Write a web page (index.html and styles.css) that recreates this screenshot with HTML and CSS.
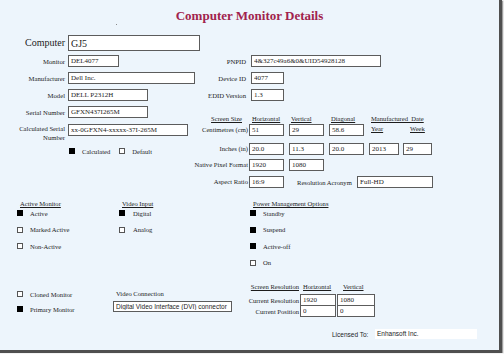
FILE: index.html
```html
<!DOCTYPE html>
<html lang="en">
<head>
    <meta charset="UTF-8">
    <meta name="viewport" content="width=device-width, initial-scale=1.0">
    <title>Computer Monitor Details</title>
    <link rel="stylesheet" href="styles.css">
</head>
<body>
    <div class="window">
        <h1 class="title">Computer Monitor Details</h1>
        <div class="dot"></div>

        <div class="top">
            <div class="col-left">
                <div class="field-row big">
                    <label class="lbl">Computer</label>
                    <input class="field w137" type="text" value="GJ5" readonly>
                </div>
                <div class="field-row first">
                    <label class="lbl">Monitor</label>
                    <input class="field w51" type="text" value="DEL4077" readonly>
                </div>
                <div class="field-row">
                    <label class="lbl">Manufacturer</label>
                    <input class="field w127" type="text" value="Dell Inc." readonly>
                </div>
                <div class="field-row">
                    <label class="lbl">Model</label>
                    <input class="field w80" type="text" value="DELL P2312H" readonly>
                </div>
                <div class="field-row">
                    <label class="lbl">Serial Number</label>
                    <input class="field w80" type="text" value="GFXN437I265M" readonly>
                </div>
                <div class="field-row tall">
                    <label class="lbl">Calculated Serial<br>Number</label>
                    <input class="field w120" type="text" value="xx-0GFXN4-xxxxx-37I-265M" readonly>
                </div>
                <div class="checks">
                    <span class="check"><span class="box on"></span>Calculated</span>
                    <span class="check"><span class="box"></span>Default</span>
                </div>
            </div>

            <div class="col-right">
                <div class="field-row first">
                    <label class="lbl">PNPID</label>
                    <input class="field w130" type="text" value="4&amp;327c49a6&amp;0&amp;UID54928128" readonly>
                </div>
                <div class="field-row">
                    <label class="lbl">Device ID</label>
                    <input class="field w33" type="text" value="4077" readonly>
                </div>
                <div class="field-row">
                    <label class="lbl">EDID Version</label>
                    <input class="field w33" type="text" value="1.3" readonly>
                </div>

                <div class="size-grid">
                    <span class="head lbl-cell"><span>Screen Size</span></span>
                    <span class="head">Horizontal</span>
                    <span class="head">Vertical</span>
                    <span class="head">Diagonal</span>
                    <span class="head span2">Manufactured&nbsp; Date</span>

                    <span class="lbl-cell">Centimetres (cm)</span>
                    <input class="field w35" type="text" value="51" readonly>
                    <input class="field w35" type="text" value="29" readonly>
                    <input class="field w35" type="text" value="58.6" readonly>
                    <span class="head">Year</span>
                    <span class="head week">Week</span>

                    <span class="lbl-cell">Inches (in)</span>
                    <input class="field w35" type="text" value="20.0" readonly>
                    <input class="field w35" type="text" value="11.3" readonly>
                    <input class="field w35" type="text" value="20.0" readonly>
                    <input class="field w30" type="text" value="2013" readonly>
                    <input class="field w29" type="text" value="29" readonly>

                    <span class="lbl-cell">Native Pixel Format</span>
                    <input class="field w35" type="text" value="1920" readonly>
                    <input class="field w35 span4" type="text" value="1080" readonly>

                    <span class="lbl-cell">Aspect Ratio</span>
                    <input class="field w35" type="text" value="16:9" readonly>
                    <div class="acronym">
                        <span>Resolution Acronym</span>
                        <input class="field w76" type="text" value="Full-HD" readonly>
                    </div>
                </div>
            </div>
        </div>

        <div class="options">
            <div class="group g1">
                <div class="head">Active Monitor</div>
                <div class="items">
                    <span class="check"><span class="box on"></span>Active</span>
                    <span class="check"><span class="box"></span>Marked Active</span>
                    <span class="check"><span class="box"></span>Non-Active</span>
                </div>
            </div>
            <div class="group g2">
                <div class="head">Video Input</div>
                <div class="items">
                    <span class="check wide"><span class="box on"></span>Digital</span>
                    <span class="check wide"><span class="box"></span>Analog</span>
                </div>
            </div>
            <div class="group">
                <div class="head head-power">Power Management Options</div>
                <div class="items">
                    <span class="check"><span class="box on"></span>Standby</span>
                    <span class="check"><span class="box on"></span>Suspend</span>
                    <span class="check"><span class="box on"></span>Active-off</span>
                    <span class="check"><span class="box"></span>On</span>
                </div>
            </div>
        </div>

        <div class="bottom">
            <div class="group b1">
                <span class="check"><span class="box"></span>Cloned Monitor</span>
                <span class="check"><span class="box on"></span>Primary Monitor</span>
            </div>
            <div class="group b2">
                <span class="conn-label">Video Connection</span>
                <input class="field sans w119" type="text" value="Digital Video Interface (DVI) connector" readonly>
            </div>
            <div class="res-table">
                <div class="res-row">
                    <span class="res-lbl"><span class="head">Screen Resolution</span></span>
                    <span class="head res-h">Horizontal</span>
                    <span class="head res-v">Vertical</span>
                </div>
                <div class="res-row vals">
                    <span class="res-lbl">Current Resolution</span>
                    <input class="field w36" type="text" value="1920" readonly>
                    <input class="field w38" type="text" value="1080" readonly>
                </div>
                <div class="res-row vals next">
                    <span class="res-lbl">Current Position</span>
                    <input class="field w36" type="text" value="0" readonly>
                    <input class="field w38" type="text" value="0" readonly>
                </div>
            </div>
        </div>

        <div class="license">
            <span class="license-label">Licensed To:</span>
            <span class="license-value">Enhansoft Inc.</span>
        </div>
    </div>
</body>
</html>
```

FILE: styles.css
```css
body {
    margin: 0;
    background: #f3f3f3;
    font-family: "Liberation Serif", "Times New Roman", serif;
    color: #1c1c1c;
}

.window {
    width: 502px;
    height: 353px;
    box-sizing: border-box;
    background: #edf5fc;
    border-right: 3px solid #4f4f4f;
    border-bottom: 3px solid #4f4f4f;
    box-shadow: 1px 1px 1px rgba(0, 0, 0, 0.35);
    overflow: hidden;
    white-space: nowrap;
}

.title {
    margin: 0;
    padding-top: 8px;
    font-size: 13px;
    line-height: 15px;
    font-weight: bold;
    text-align: center;
    color: #a1234d;
}

.dot {
    width: 1px;
    height: 1px;
    margin: 1px 0 0 116px;
    background: #8a8a8a;
}

/* inputs */
.field {
    display: block;
    box-sizing: border-box;
    height: 12px;
    margin: 0;
    padding: 0 2px;
    border: 1px solid #5c5c5c;
    background: #fff;
    font-family: "Liberation Serif", "Times New Roman", serif;
    font-size: 7px;
    color: #1c1c1c;
    outline: none;
}

.field.sans {
    font-family: "Liberation Sans", Arial, sans-serif;
    font-size: 6.5px;
}

.w29 { width: 29px; }
.w30 { width: 30px; }
.w33 { width: 33px; }
.w35 { width: 35px; }
.w36 { width: 36px; }
.w38 { width: 38px; }
.w51 { width: 51px; }
.w76 { width: 76px; }
.w80 { width: 80px; }
.w119 { width: 119px; }
.w120 { width: 120px; }
.w127 { width: 127px; }
.w130 { width: 130px; }
.w137 { width: 137px; }

/* top area */
.top {
    display: flex;
    margin-top: 10px;
}

.col-left {
    flex: none;
    width: 200px;
    min-width: 0;
}

.col-right {
    padding-top: 20px;
}

.field-row {
    display: flex;
    align-items: center;
    gap: 3px;
    margin-top: 5px;
}

.field-row.big,
.field-row.first {
    margin-top: 0;
}

.col-left .field-row.first {
    margin-top: 4px;
}

.field-row.tall {
    align-items: flex-start;
    margin-top: 6px;
}

.lbl {
    flex: none;
    width: 65px;
    text-align: right;
    font-size: 6.7px;
    line-height: 9px;
}

.col-right .field-row {
    gap: 5px;
}

.col-right .lbl {
    width: 46px;
}

.big .lbl {
    font-size: 10px;
    line-height: 12px;
}

.big .field {
    height: 16px;
    font-size: 10px;
}

.checks {
    display: flex;
    align-items: center;
    margin-top: 4px;
    padding-left: 69px;
}

.checks .check {
    margin-right: 9px;
}

/* checkboxes */
.check {
    display: flex;
    align-items: center;
    gap: 7px;
    height: 10px;
    font-size: 6.6px;
}

.check.wide {
    gap: 8px;
}

.box {
    flex: none;
    width: 6px;
    height: 6px;
    box-sizing: border-box;
    border: 1px solid #555;
    background: #fff;
}

.box.on {
    background: #000;
    border-color: #000;
}

.head {
    font-size: 6.6px;
    line-height: 9px;
    text-decoration: underline;
    padding-left: 2px;
}

/* screen size table */
.size-grid {
    display: grid;
    grid-template-columns: 49px 40px 40px 40px 34px 30px;
    grid-template-rows: 10px 19px 16px 17px 11px;
    align-items: start;
    margin-top: 13px;
}

.size-grid .head {
    line-height: 10px;
}

.size-grid .lbl-cell {
    display: flex;
    justify-content: flex-end;
    padding-right: 1px;
    font-size: 6.6px;
    line-height: 11px;
}

.size-grid .head.lbl-cell {
    padding-right: 7px;
    line-height: 10px;
}

.size-grid .head.week {
    padding-left: 7px;
}

.span2 {
    grid-column: span 2;
}

.span4 {
    grid-column: span 4;
}

.size-grid .head:nth-child(2) {
    padding-left: 3px;
}

.acronym {
    grid-column: span 4;
    display: flex;
    align-items: center;
    padding-left: 8px;
    font-size: 6.6px;
}

.acronym .field {
    margin-left: auto;
}

/* option groups */
.options {
    display: flex;
    margin-top: 12px;
    padding-left: 17px;
}

.group {
    display: flex;
    flex-direction: column;
}

.g1 {
    width: 102px;
}

.g2 {
    width: 131px;
}

.group .head {
    padding-left: 3px;
}

.items {
    display: flex;
    flex-direction: column;
    gap: 6.5px;
}

/* bottom area */
.bottom {
    display: flex;
    margin-top: 14.5px;
    padding-left: 17px;
}

.b1 {
    width: 96px;
    padding-top: 7px;
    gap: 5px;
}

.b2 {
    width: 138px;
    padding-top: 7px;
}

.conn-label {
    padding-left: 3px;
    font-size: 6.6px;
    line-height: 9px;
}

.b2 .field {
    height: 11px;
    margin-top: 3px;
}

.res-row {
    display: flex;
    align-items: center;
    height: 9px;
}

.res-lbl {
    flex: none;
    display: flex;
    justify-content: flex-end;
    width: 49px;
    padding-right: 1px;
    box-sizing: border-box;
    font-size: 6.6px;
    line-height: 9px;
}

.res-lbl .head {
    padding-left: 0;
}

.res-h {
    width: 37px;
    box-sizing: border-box;
    padding-left: 3px;
}

.res-v {
    padding-left: 6px;
}

.res-row.vals {
    height: 12px;
    margin-top: 3px;
}

.res-row.vals .field {
    margin-right: 1px;
}

.res-row.next {
    margin-top: -1px;
}

/* license */
.license {
    display: flex;
    align-items: center;
    margin-top: 12px;
    padding-left: 332px;
    font-family: "Liberation Sans", Arial, sans-serif;
    font-size: 6.5px;
}

.license-label {
    width: 43px;
}

.license-value {
    width: 102px;
    height: 10px;
    line-height: 10px;
    padding-left: 2px;
    box-sizing: border-box;
    background: #fff;
}
```
